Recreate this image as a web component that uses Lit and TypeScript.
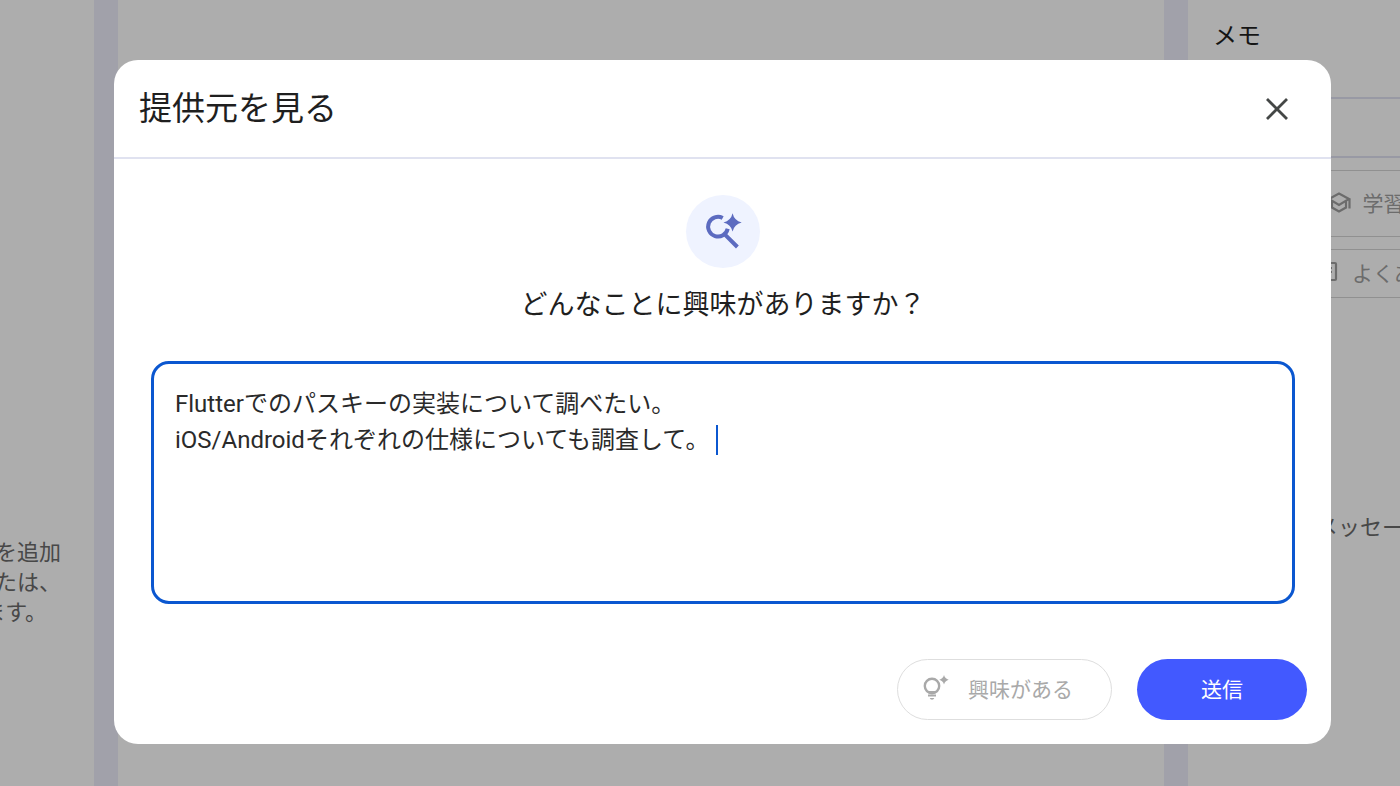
import { LitElement, html, css, svg } from "lit";
import { customElement, state } from "lit/decorators.js";

const closeIcon = svg`<path d="M5 5L25 25M25 5L5 25" fill="none" stroke="#444746" stroke-width="2.8" />`;

@customElement("app-root")
export class AppRoot extends LitElement {
  static styles = css`
    :host {
      display: block;
      font-family: Roboto, "Noto Sans CJK JP", sans-serif;
      color: #1f1f1f;
    }
    * {
      box-sizing: border-box;
    }
    h1,
    h2,
    p {
      margin: 0;
      font-weight: 400;
    }
    button {
      font: inherit;
      cursor: pointer;
    }
    svg {
      display: block;
      flex: none;
    }
    .workspace {
      display: grid;
      grid-template-columns: 94px minmax(0, 1fr) 212px;
      gap: 24px;
      height: 100vh;
      overflow: hidden;
      background: #edeefb;
    }
    .panel {
      overflow: hidden;
      background: #fff;
    }
    .sources {
      display: flex;
      flex-direction: column;
      align-items: flex-end;
      padding: 538px 33px 0 0;
      font-size: 22px;
      line-height: 30px;
      color: #6b6b6b;
      white-space: nowrap;
    }
    .closing {
      padding-right: 14px;
    }
    .notes-inner {
      width: 420px;
    }
    .notes-head {
      height: 99px;
      padding: 18px 25px;
      border-bottom: 2px solid #e0e2f2;
    }
    .notes-head h2 {
      font-size: 24px;
      line-height: 36px;
    }
    .notes-bar {
      height: 59px;
      border-bottom: 2px solid #e0e2f2;
    }
    .chips {
      display: grid;
      gap: 12px;
      padding: 12px 26px 12px 24px;
    }
    .chip {
      display: flex;
      align-items: center;
      justify-content: center;
      gap: 12px;
      height: 49px;
      padding: 0 20px 3px;
      border: 1px solid #d4d4d4;
      border-radius: 24px;
      background: #fff;
      font-size: 21px;
      color: #a0a0a0;
    }
    .chip.tall {
      height: 67px;
    }
    .hint {
      padding: 203px 0 0 128px;
      font-size: 22px;
      line-height: 30px;
      color: #6b6b6b;
      white-space: nowrap;
    }
    .backdrop {
      position: fixed;
      inset: 0;
      display: flex;
      align-items: flex-start;
      padding: 60px 69px 42px 114px;
      background: rgba(0, 0, 0, 0.32);
    }
    .dialog {
      flex: 1;
      min-width: 0;
      border-radius: 24px;
      background: #fff;
    }
    .dialog-head {
      display: flex;
      align-items: center;
      justify-content: space-between;
      height: 99px;
      padding: 0 39px 0 25px;
      border-bottom: 2px solid #e0e2f0;
    }
    .dialog-head h1 {
      font-size: 33px;
      line-height: 48px;
    }
    .close {
      padding: 0;
      border: 0;
      background: none;
    }
    .body {
      display: flex;
      flex-direction: column;
      align-items: center;
      padding: 36px 36px 0 37px;
    }
    .badge {
      display: grid;
      place-items: center;
      width: 74px;
      height: 73px;
      border-radius: 50%;
      background: #eff3ff;
    }
    .question {
      margin: 17px 0 36px;
      font-size: 27px;
      line-height: 40px;
    }
    .field {
      position: relative;
      width: 100%;
    }
    .field textarea {
      display: block;
      width: 100%;
      height: 243px;
      padding: 22px 21px;
      border: 3px solid #0b57d0;
      border-radius: 18px;
      outline: none;
      resize: none;
      background: #fff;
      font: inherit;
      font-size: 24px;
      line-height: 36px;
      color: #2a2a2a;
      caret-color: transparent;
    }
    .caret {
      position: absolute;
      top: 64px;
      left: 565px;
      width: 2px;
      height: 30px;
      background: #0b57d0;
    }
    .actions {
      display: flex;
      justify-content: flex-end;
      gap: 25px;
      padding: 55px 24px 24px;
    }
    .action {
      display: flex;
      align-items: center;
      justify-content: center;
      gap: 18px;
      height: 61px;
      border-radius: 31px;
      font-size: 21px;
    }
    .curious {
      padding: 0 38px 3px 20px;
      border: 1px solid #dedede;
      background: #fff;
      color: #a9a9a9;
    }
    .send {
      width: 170px;
      padding: 0 0 3px;
      border: 0;
      background: #4259ff;
      color: #fff;
    }
  `;

  @state() private topic =
    "Flutterでのパスキーの実装について調べたい。\niOS/Androidそれぞれの仕様についても調査して。";

  private onInput(e: Event) {
    this.topic = (e.target as HTMLTextAreaElement).value;
  }

  render() {
    return html`
      <div class="workspace">
        <aside class="panel sources">
          <p>を追加</p>
          <p>たは、</p>
          <p class="closing">ます。</p>
        </aside>
        <main class="panel"></main>
        <aside class="panel">
          <div class="notes-inner">
            <div class="notes-head"><h2>メモ</h2></div>
            <div class="notes-bar"></div>
            <div class="chips">
              <button class="chip tall">
                <svg width="24" height="24" viewBox="0 0 24 24" fill="none" stroke="currentColor" stroke-width="2.2">
                  <path d="M2 9L12 3.500L22 9L12 15zM5 11v6.500l7 4 7-4v-7M22.500 8.500v10" />
                </svg>
                学習ガイド
              </button>
              <button class="chip">
                <svg width="24" height="24" viewBox="0 0 24 24" fill="none" stroke="currentColor" stroke-width="2.2">
                  <rect x="4" y="3" width="16" height="17" rx="1" />
                  <path d="M8 8h8M8 12h8M8 16h5" />
                </svg>
                よくある質問
              </button>
            </div>
            <p class="hint">メッセージ</p>
          </div>
        </aside>
      </div>
      <div class="backdrop">
        <section class="dialog" role="dialog" aria-modal="true" aria-labelledby="title">
          <header class="dialog-head">
            <h1 id="title">提供元を見る</h1>
            <button class="close" aria-label="閉じる">
              <svg width="30" height="30" viewBox="0 0 30 30">${closeIcon}</svg>
            </button>
          </header>
          <div class="body">
            <div class="badge">
              <svg width="74" height="73" viewBox="0 0 74 73">
                <path
                  d="M36.700 22.900A9.900 9.900 0 1 0 41.700 33.800M39 39.600L51.400 52"
                  fill="none"
                  stroke="#5c6bc0"
                  stroke-width="4"
                />
                <path
                  d="M46.600 18.300Q48.200 25.700 55.700 27.400Q48.200 29.100 46.600 36.500Q44.900 29.100 37.500 27.400Q44.900 25.700 46.600 18.300Z"
                  fill="#5c6bc0"
                />
              </svg>
            </div>
            <label class="question" for="topic">どんなことに興味がありますか？</label>
            <div class="field">
              <textarea id="topic" spellcheck="false" .value=${this.topic} @input=${this.onInput}></textarea>
              <span class="caret"></span>
            </div>
          </div>
          <footer class="actions">
            <button class="action curious">
              <svg width="32" height="32" viewBox="0 0 32 32">
                <circle cx="14" cy="14" r="7.200" fill="none" stroke="currentColor" stroke-width="2.400" />
                <path d="M10.300 19h7.400v2.200h-7.400zM10 22.500h8v2h-8zM11.700 26h4.600q-.6 1.800-2.300 1.800t-2.300-1.800z" fill="currentColor" />
                <path d="M26 3q1 3.800 4.700 4.800q-3.700 1-4.700 4.800q-1-3.800-4.700-4.800q3.700-1 4.700-4.800z" fill="currentColor" />
              </svg>
              興味がある
            </button>
            <button class="action send">送信</button>
          </footer>
        </section>
      </div>
    `;
  }
}
